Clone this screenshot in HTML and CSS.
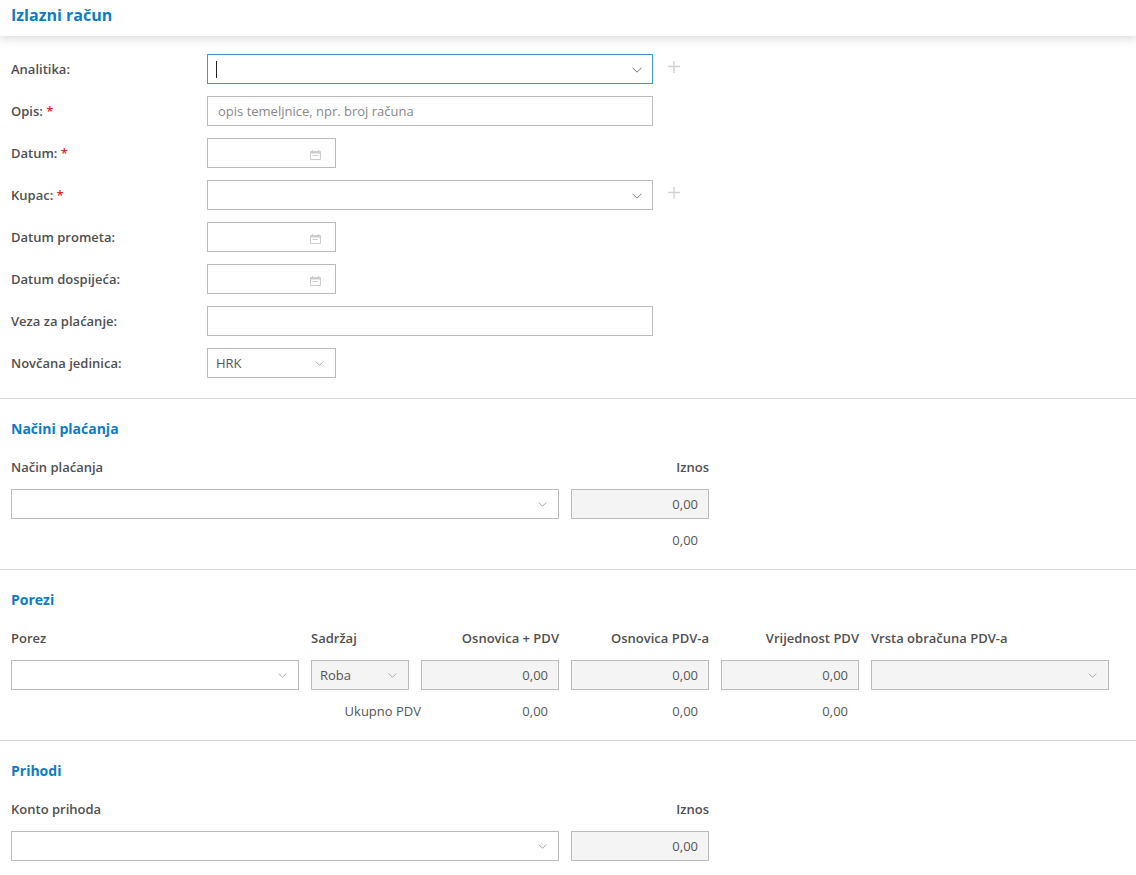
FILE: index.html
```html
<!DOCTYPE html>
<html lang="hr">
<head>
<meta charset="utf-8">
<title>Izlazni račun</title>
<link rel="stylesheet" href="styles.css">
</head>
<body>
<svg class="defs" width="0" height="0" aria-hidden="true">
  <symbol id="chev" viewBox="0 0 10 6"><path d="M.5.7 5 5.2 9.5.7" fill="none" stroke="currentColor" stroke-width="1"/></symbol>
  <symbol id="cal" viewBox="0 0 11 10"><path d="M.5 1.5h10v8H.5z" fill="none" stroke="currentColor"/><path d="M1 1.5h9v2H1z" fill="currentColor"/><path d="M2.5 0v1.5M8.5 0v1.5" stroke="currentColor"/><path d="M2.5 5.5h5" stroke="currentColor"/></symbol>
  <symbol id="plus" viewBox="0 0 12 12"><path d="M0 5.5h12M6 0v12" fill="none" stroke="currentColor" stroke-width="1.4"/></symbol>
</svg>
<header class="topbar"><h1>Izlazni račun</h1></header>
<main>
  <section class="form">
    <div class="row"><label>Analitika:</label>
      <div class="ctl wide focus"><span class="caret"></span><svg class="chev dark"><use href="#chev"/></svg></div>
      <svg class="plus"><use href="#plus"/></svg></div>
    <div class="row"><label>Opis: <i>*</i></label>
      <div class="ctl wide"><span class="ph">opis temeljnice, npr. broj računa</span></div></div>
    <div class="row"><label>Datum: <i>*</i></label>
      <div class="ctl small"><svg class="cal"><use href="#cal"/></svg></div></div>
    <div class="row"><label>Kupac: <i>*</i></label>
      <div class="ctl wide"><svg class="chev dark"><use href="#chev"/></svg></div>
      <svg class="plus"><use href="#plus"/></svg></div>
    <div class="row"><label>Datum prometa:</label>
      <div class="ctl small"><svg class="cal"><use href="#cal"/></svg></div></div>
    <div class="row"><label>Datum dospijeća:</label>
      <div class="ctl small"><svg class="cal"><use href="#cal"/></svg></div></div>
    <div class="row"><label>Veza za plaćanje:</label>
      <div class="ctl wide"></div></div>
    <div class="row"><label>Novčana jedinica:</label>
      <div class="ctl small"><span class="val">HRK</span><svg class="chev"><use href="#chev"/></svg></div></div>
  </section>

  <section class="block first">
    <h2>Načini plaćanja</h2>
    <div class="grid two">
      <div class="th">Način plaćanja</div><div class="th r">Iznos</div>
      <div class="ctl"><svg class="chev"><use href="#chev"/></svg></div>
      <div class="ctl ro num">0,00</div>
      <div></div><div class="sum">0,00</div>
    </div>
  </section>

  <section class="block">
    <h2>Porezi</h2>
    <div class="grid six">
      <div class="th">Porez</div><div class="th">Sadržaj</div><div class="th r">Osnovica + PDV</div><div class="th r">Osnovica PDV-a</div><div class="th r">Vrijednost PDV</div><div class="th">Vrsta obračuna PDV-a</div>
      <div class="ctl"><svg class="chev"><use href="#chev"/></svg></div>
      <div class="ctl ro"><span class="val">Roba</span><svg class="chev"><use href="#chev"/></svg></div>
      <div class="ctl ro num">0,00</div>
      <div class="ctl ro num">0,00</div>
      <div class="ctl ro num">0,00</div>
      <div class="ctl ro"><svg class="chev"><use href="#chev"/></svg></div>
      <div class="total-label">Ukupno PDV</div><div class="sum">0,00</div><div class="sum">0,00</div><div class="sum">0,00</div><div></div>
    </div>
  </section>

  <section class="block">
    <h2>Prihodi</h2>
    <div class="grid two">
      <div class="th">Konto prihoda</div><div class="th r">Iznos</div>
      <div class="ctl"><svg class="chev"><use href="#chev"/></svg></div>
      <div class="ctl ro num">0,00</div>
    </div>
  </section>
</main>
</body>
</html>
```
FILE: styles.css
```css
* { box-sizing: border-box; }
html, body { margin: 0; padding: 0; height: 875px; overflow: hidden; background: #fff; }
body { font-family: "Open Sans", "Liberation Sans", sans-serif; font-size: 13px; line-height: 18px; color: #444; }
.defs { position: absolute; }

.topbar { height: 36px; padding: 5px 11px 0; background: #fff; box-shadow: 0 2px 10px rgba(0, 0, 0, .16); position: relative; }
.topbar h1 { margin: 0; font-size: 16px; line-height: 21px; font-weight: 700; color: #0f7cc2; }

.form { padding: 18px 0 20px 11px; display: flex; flex-direction: column; gap: 12px; }
.row { display: flex; align-items: center; height: 30px; }
.row label { width: 196px; font-weight: 600; color: #505050; }
.row label i { font-style: normal; font-weight: 600; color: #e3262c; font-size: 13px; }

.ctl { height: 30px; border: 1px solid #bbb; background: #fff; display: flex; align-items: center; padding: 0 8px 0 10px; position: relative; }
.wide { width: 446px; }
.small { width: 129px; }
.focus { border-color: #3f97d0; }
.caret { width: 1px; height: 17px; background: #222; margin-left: -2px; }
.ph { color: #888; }
.val { color: #555; margin-left: -2px; }
.ro { background: #f4f4f4; }
.num { justify-content: flex-end; padding-right: 10px; color: #555; }

.chev { width: 9px; height: 5px; margin-left: auto; margin-right: 3px; margin-top: 0; color: #999; }
.chev.dark { width: 10px; height: 6px; margin-right: 2px; margin-top: 1px; color: #777; }
.cal { width: 11px; height: 10px; margin-left: auto; margin-right: 6px; margin-top: 3px; color: #ccc; }
.plus { margin: -5px 0 0 15px; width: 12px; height: 12px; color: #d2d2d2; }

.block { border-top: 1px solid #d4d4d4; padding: 20px 27px 0 11px; height: 171px; }
.block h2 { margin: 0; font-size: 14px; line-height: 19px; font-weight: 700; color: #0f7cc2; }
.grid { display: grid; column-gap: 12px; margin-top: 20px; }
.two { grid-template-columns: 548px 138px; grid-template-rows: 31px 30px 22px; }
.six { grid-template-columns: 288px 98px 138px 138px 138px 238px; grid-template-rows: 31px 30px 22px; }
.th { font-weight: 600; color: #505050; line-height: 18px; }
.r { text-align: right; }
.sum { text-align: right; padding-right: 11px; color: #555; padding-top: 12px; line-height: 18px; height: 30px; }
.total-label { grid-column: 1 / 3; text-align: right; margin-right: -12px; padding-top: 12px; color: #555; height: 30px; }
```
